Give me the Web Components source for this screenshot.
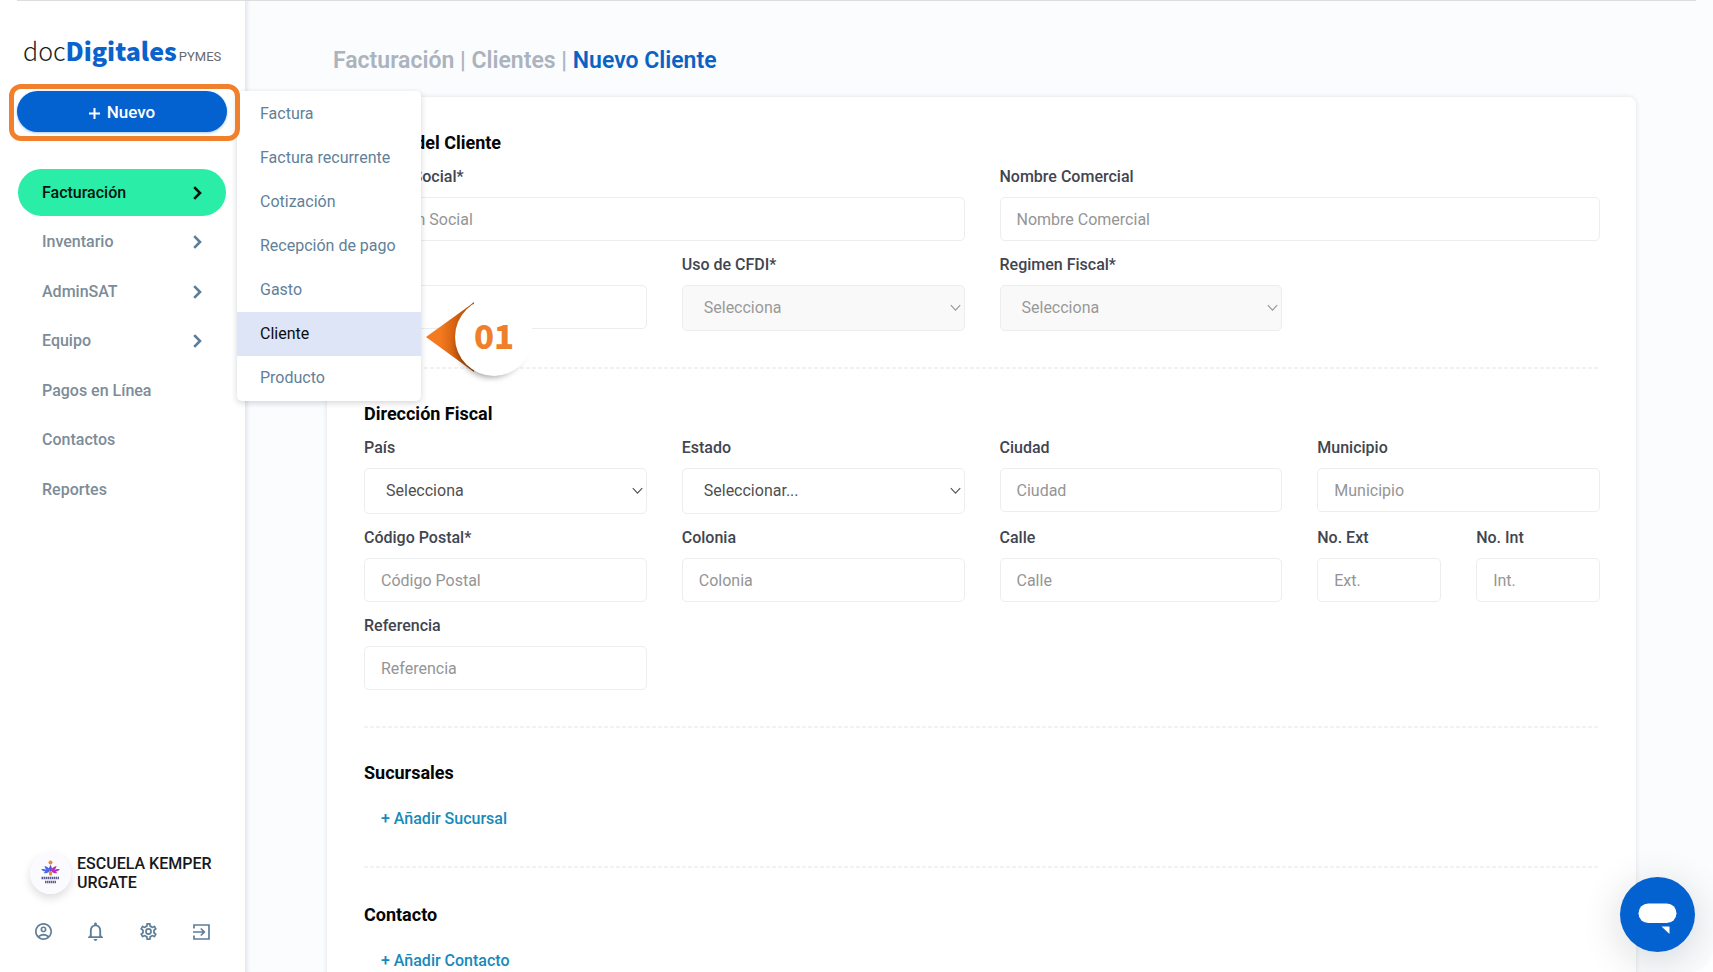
<!DOCTYPE html>
<html lang="es">
<head>
<meta charset="utf-8">
<meta name="viewport" content="width=device-width, initial-scale=1">
<title>docDigitales PYMES | Nuevo Cliente</title>
<style>
  html, body { margin: 0; height: 100%; }
  body { font-family: Roboto, "Liberation Sans", sans-serif; font-size: 16px; line-height: 20px; color: #3f444e; background: #fff; }
</style>
</head>
<body>
<dd-app>
  <dd-sidebar slot="sidebar">
    <dd-nav-item active arrow>Facturación</dd-nav-item>
    <dd-nav-item arrow>Inventario</dd-nav-item>
    <dd-nav-item arrow>AdminSAT</dd-nav-item>
    <dd-nav-item arrow>Equipo</dd-nav-item>
    <dd-nav-item>Pagos en Línea</dd-nav-item>
    <dd-nav-item>Contactos</dd-nav-item>
    <dd-nav-item>Reportes</dd-nav-item>
  </dd-sidebar>

  <dd-breadcrumb>
    <a slot="trail" href="#facturacion">Facturación</a>
    <a slot="parent" href="#clientes">Clientes</a>
    <span slot="current">Nuevo Cliente</span>
  </dd-breadcrumb>

  <dd-card>
    <dd-section heading="Datos del Cliente">
      <dd-field wide label="Razón Social*" placeholder="Razón Social"></dd-field>
      <dd-field wide label="Nombre Comercial" placeholder="Nombre Comercial"></dd-field>
      <dd-field label="RFC*" placeholder="RFC"></dd-field>
      <dd-select label="Uso de CFDI*" value="Selecciona" disabled></dd-select>
      <dd-select label="Regimen Fiscal*" value="Selecciona" disabled></dd-select>
    </dd-section>
    <dd-section heading="Dirección Fiscal">
      <dd-select label="País" value="Selecciona"></dd-select>
      <dd-select label="Estado" value="Seleccionar..."></dd-select>
      <dd-field label="Ciudad" placeholder="Ciudad"></dd-field>
      <dd-field label="Municipio" placeholder="Municipio"></dd-field>
      <dd-field label="Código Postal*" placeholder="Código Postal"></dd-field>
      <dd-field label="Colonia" placeholder="Colonia"></dd-field>
      <dd-field label="Calle" placeholder="Calle"></dd-field>
      <dd-pair>
        <dd-field label="No. Ext" placeholder="Ext."></dd-field>
        <dd-field label="No. Int" placeholder="Int."></dd-field>
      </dd-pair>
      <dd-field label="Referencia" placeholder="Referencia"></dd-field>
    </dd-section>
    <dd-section heading="Sucursales" compact>
      <dd-add-button>+ Añadir Sucursal</dd-add-button>
    </dd-section>
    <dd-section heading="Contacto" compact>
      <dd-add-button>+ Añadir Contacto</dd-add-button>
    </dd-section>
  </dd-card>

  <dd-menu slot="overlay">
    <a href="#factura">Factura</a>
    <a href="#recurrente">Factura recurrente</a>
    <a href="#cotizacion">Cotización</a>
    <a href="#recepcion">Recepción de pago</a>
    <a href="#gasto">Gasto</a>
    <a href="#cliente" aria-current="true">Cliente</a>
    <a href="#producto">Producto</a>
  </dd-menu>
  <dd-callout slot="overlay">01</dd-callout>
  <dd-chat slot="overlay"></dd-chat>
</dd-app>

<script>
  const define = (name, markup, setup) => {
    const template = document.createElement('template');
    template.innerHTML = '<style>*{box-sizing:border-box}</style>' + markup;
    customElements.define(name, class extends HTMLElement {
      constructor() {
        super();
        this.attachShadow({ mode: 'open' }).append(template.content.cloneNode(true));
      }
      connectedCallback() {
        if (setup) setup(this, this.shadowRoot);
      }
    });
  };

  define('dd-app', `
    <style>
      :host { display: grid; grid-template-columns: 245px minmax(0, 1fr); height: 100vh; position: relative; overflow: hidden; background: #fff; }
      main { min-width: 0; overflow-y: auto; scrollbar-width: none; padding: 46px 77px 0 82px; background: #fafcfe; border-bottom-right-radius: 24px; box-shadow: inset 5px 0 4px -3px rgba(30, 50, 70, .12); }
      .edge { position: absolute; top: 0; left: 17px; right: 17px; height: 1px; background: #dcdddf; z-index: 5; }
    </style>
    <div class="edge"></div>
    <slot name="sidebar"></slot>
    <main><slot></slot></main>
    <slot name="overlay"></slot>`);

  define('dd-sidebar', `
    <style>
      :host { display: flex; flex-direction: column; background: #fff; }
      .logo { display: flex; align-items: baseline; height: 36px; margin: 32px 0 16px 23px; font: 300 25px/36px "Noto Sans CJK JP", "Open Sans", sans-serif; color: #1c1e22; text-decoration: none; }
      .logo b { font-weight: 900; color: #0a62cc; }
      .logo small { margin-left: 2px; font: 400 13px/20px Roboto, sans-serif; color: #66696e; }
      .focus { position: relative; z-index: 4; margin: 0 5px 0 9px; border: 5px solid #f0802c; border-radius: 12px; padding: 2px 8px 4px 3px; }
      .new { display: block; width: 100%; height: 41px; border: 0; border-radius: 21px; background: #0362d0; color: #fff; font: 500 17px/20px Roboto, sans-serif; box-shadow: 0 1px 3px rgba(3, 98, 208, .35); }
      .new svg { margin-right: 7px; vertical-align: -1px; }
      nav { display: flex; flex-direction: column; justify-content: space-between; min-height: 344px; margin: 28px 19px 0 18px; }
      footer { margin-top: auto; padding-bottom: 31px; }
      .who { display: flex; gap: 6px; margin: 0 10px 0 30px; color: #17191d; font: 500 16px/19px Roboto, sans-serif; }
      .who svg { flex: none; border-radius: 50%; box-shadow: 0 4px 10px rgba(0, 0, 0, .14); }
      .who span { padding-top: 1px; }
      .tools { display: flex; justify-content: space-between; align-items: center; margin: 28px 35px 0 35px; }
      .tools button { display: block; border: 0; padding: 0; background: none; color: #5f7f99; line-height: 0; }
    </style>
    <a class="logo" href="#inicio">doc<b>Digitales</b><small>PYMES</small></a>
    <div class="focus"><button class="new"><svg width="11" height="11" viewBox="0 0 11 11" stroke="#fff" stroke-width="2" aria-hidden="true"><path d="M5.500 0v11M0 5.500h11"/></svg>Nuevo</button></div>
    <nav><slot></slot></nav>
    <footer>
      <div class="who">
        <svg width="41" height="41" viewBox="0 0 41 41" role="img" aria-label="Escuela Kemper">
          <circle cx="20.500" cy="20.500" r="20.500" fill="#fbfbff"/>
          <circle cx="20.500" cy="9.500" r="2" fill="#e58a3c"/>
          <path d="M20 17.500c-1-3-3.500-4-5.500-4.500.3 2 1 3 2 3.700-1.800-.6-3.600-.9-5.300-.4 1.200 1.700 2.600 2.200 4.200 2.200l-1.800 1.400c2.700.8 5.200.2 6.400-2.400z" fill="#4a68e6"/>
          <path d="M21 17.500c1-3 3.500-4 5.500-4.500-.3 2-1 3-2 3.700 1.800-.6 3.600-.9 5.300-.4-1.200 1.700-2.600 2.200-4.200 2.200l1.800 1.400c-2.700.8-5.200.2-6.400-2.400z" fill="#b432b4"/>
          <path d="M20.500 11.500l1.600 4-1.600 4-1.600-4z" fill="#6a4ad0"/>
          <rect x="19" y="18.500" width="3" height="4" rx="1" fill="#e58a3c"/>
          <path d="M11.500 25h18" stroke="#5b5c90" stroke-width="2.500" stroke-dasharray="1.500 .5"/>
          <path d="M15 29h11" stroke="#5b5c90" stroke-width="2.500" stroke-dasharray="1.500 .5"/>
        </svg>
        <span>ESCUELA KEMPER URGATE</span>
      </div>
      <div class="tools">
        <button aria-label="Cuenta"><svg width="17" height="17" viewBox="2 2 20 20" fill="currentColor"><path d="M12 2C6.480 2 2 6.480 2 12s4.480 10 10 10 10-4.480 10-10S17.520 2 12 2zM7.350 18.500C8.660 17.560 10.260 17 12 17s3.340.56 4.650 1.500C15.340 19.440 13.740 20 12 20s-3.340-.56-4.650-1.500zm10.790-1.380a9.950 9.950 0 0 0-12.280 0A7.960 7.960 0 0 1 4 12c0-4.420 3.580-8 8-8s8 3.580 8 8c0 1.950-.7 3.730-1.860 5.120zM12 6c-1.930 0-3.500 1.570-3.500 3.500S10.070 13 12 13s3.500-1.570 3.500-3.500S13.930 6 12 6zm0 5c-.83 0-1.500-.67-1.500-1.500S11.170 8 12 8s1.500.67 1.500 1.500S12.830 11 12 11z"/></svg></button>
        <button aria-label="Notificaciones"><svg width="15" height="19" viewBox="4 2 16 20" fill="currentColor"><path d="M12 22c1.100 0 2-.9 2-2h-4c0 1.100.9 2 2 2zm6-6v-5c0-3.070-1.630-5.640-4.500-6.320V4c0-.83-.67-1.500-1.500-1.500s-1.500.67-1.500 1.500v.68C7.640 5.360 6 7.920 6 11v5l-2 2v1h16v-1l-2-2zm-2 1H8v-6c0-2.480 1.510-4.500 4-4.500s4 2.020 4 4.500v6z"/></svg></button>
        <button aria-label="Configuración"><svg width="17" height="17" viewBox="2 2 20 20" fill="currentColor"><path d="M19.430 12.980c.04-.32.07-.64.07-.98s-.03-.66-.07-.98l2.110-1.650c.19-.15.24-.42.12-.64l-2-3.460a.5.5 0 0 0-.61-.22l-2.490 1c-.52-.4-1.080-.73-1.690-.98l-.38-2.650A.49.490 0 0 0 14 2h-4a.49.490 0 0 0-.49.420l-.38 2.650c-.61.25-1.170.59-1.690.98l-2.490-1a.5.5 0 0 0-.61.220l-2 3.460c-.13.220-.07.490.12.640l2.110 1.650c-.04.320-.07.650-.07.980s.03.660.07.980l-2.110 1.650c-.19.150-.24.420-.12.640l2 3.460c.12.220.39.300.61.220l2.490-1c.52.400 1.080.730 1.690.980l.38 2.650c.03.240.24.420.49.420h4c.25 0 .46-.18.49-.42l.38-2.650c.61-.25 1.170-.59 1.690-.98l2.490 1c.23.090.49 0 .61-.22l2-3.460a.5.5 0 0 0-.12-.64zM17.450 11.270c.04.310.05.520.05.730s-.02.430-.05.730l-.14 1.130.89.700 1.080.84-.7 1.210-1.270-.51-1.040-.42-.9.680c-.43.320-.84.560-1.250.730l-1.060.43-.16 1.130-.2 1.350h-1.400l-.35-2.480-1.060-.43c-.43-.18-.83-.41-1.230-.71l-.91-.7-1.060.43-1.270.51-.7-1.210 1.970-1.540-.14-1.130a8 8 0 0 1 0-1.480l.14-1.130-1.970-1.540.7-1.210 1.270.51 1.040.42.9-.68c.43-.32.84-.56 1.250-.73l1.060-.43.360-2.480h1.390l.35 2.480 1.060.43c.43.180.83.410 1.230.710l.91.700 1.060-.43 1.270-.51.7 1.210-1.960 1.550zM12 8a4 4 0 1 0 0 8 4 4 0 0 0 0-8zm0 6a2 2 0 1 1 0-4 2 2 0 0 1 0 4z"/></svg></button>
        <button aria-label="Salir"><svg width="17" height="18" viewBox="0 0 17 18" fill="none" stroke="currentColor" stroke-width="1.700"><path d="M1 5.500V2h15v14H1v-3.500M0 9h11M7.800 5.500L11.300 9l-3.500 3.500"/></svg></button>
      </div>
    </footer>`);

  define('dd-nav-item', `
    <style>
      :host { display: block; }
      a { display: flex; align-items: center; justify-content: space-between; height: 47px; padding: 0 24px; border-radius: 24px; color: #7d8c99; font-weight: 500; text-decoration: none; }
      svg { display: none; color: #5a7d9a; }
      :host([arrow]) svg { display: block; }
      :host([active]) a { background: #2aeda7; color: #07130f; }
      :host([active]) svg { color: #07130f; }
    </style>
    <a href="#"><slot></slot><svg width="9" height="14" viewBox="0 0 9 14" fill="none" stroke="currentColor" stroke-width="2.600"><path d="M1.200 1.200L7 7l-5.800 5.800"/></svg></a>`);

  define('dd-breadcrumb', `
    <style>
      :host { display: block; margin: 0 0 21px 6px; font-size: 23px; line-height: 30px; font-weight: 600; color: #abb3bd; }
      ::slotted(a) { color: inherit; text-decoration: none; }
      ::slotted(span) { color: #0a62c4; }
    </style>
    <slot name="trail"></slot> | <slot name="parent"></slot> | <slot name="current"></slot>`);

  define('dd-card', `
    <style>
      :host { display: block; padding: 34px 36px 36px 37px; min-height: calc(100vh - 97px); box-sizing: border-box; background: #fff; border-radius: 8px; box-shadow: 0 0 5px rgba(30, 50, 70, .12); }
    </style>
    <slot></slot>`);

  define('dd-section', `
    <style>
      :host { display: block; margin-bottom: 33px; padding-bottom: 38px; background: repeating-linear-gradient(90deg, #f1f2f2 0 4px, transparent 4px 6px) left bottom / 100% 2px no-repeat; }
      h2 { margin: 0 0 11px; font-size: 18px; line-height: 24px; font-weight: 700; color: #050607; }
      .grid { display: grid; grid-template-columns: repeat(4, minmax(0, 1fr)); column-gap: 35px; row-gap: 13px; align-items: start; }
      :host([compact]) { margin-bottom: 35px; padding-bottom: 39px; }
      :host([compact]) h2 { margin-bottom: 24px; }
      :host([compact]) .grid { padding-left: 17px; }
      :host(:last-child) { margin: 0; background: none; }
      ::slotted([wide]) { grid-column: span 2; }
    </style>
    <h2></h2><div class="grid"><slot></slot></div>`,
    (el, root) => { root.querySelector('h2').textContent = el.getAttribute('heading'); });

  define('dd-pair', `
    <style>:host { display: grid; grid-template-columns: repeat(2, minmax(0, 1fr)); column-gap: 35px; }</style>
    <slot></slot>`);

  define('dd-field', `
    <style>
      :host { display: block; }
      label { display: block; margin-bottom: 9px; line-height: 22px; font-weight: 500; color: #41454f; }
      input { display: block; width: 100%; height: 44px; padding: 0 16px; border: 1px solid #ecedee; border-radius: 5px; background: #fff; font: inherit; color: #444; outline: 0; }
      input::placeholder { color: #959595; opacity: 1; }
    </style>
    <label for="box"></label><input id="box" type="text">`,
    (el, root) => {
      root.querySelector('label').textContent = el.getAttribute('label');
      root.querySelector('input').placeholder = el.getAttribute('placeholder');
    });

  define('dd-select', `
    <style>
      :host { display: block; }
      label { display: block; margin-bottom: 9px; line-height: 22px; font-weight: 500; color: #41454f; }
      .box { display: grid; align-items: center; }
      select, svg { grid-area: 1 / 1; }
      select { appearance: none; width: 100%; height: 46px; padding: 0 21px; border: 1px solid #ecedee; border-radius: 5px; background: #fff; font: inherit; color: #4f4f4f; opacity: 1; }
      svg { justify-self: end; margin-right: 4px; color: #555; pointer-events: none; }
      :host([disabled]) select { background: #f9f9f9; color: #999; }
      :host([disabled]) svg { color: #999; }
    </style>
    <label for="box"></label>
    <div class="box"><select id="box"><option></option></select><svg width="11" height="8" viewBox="0 0 11 8" fill="none" stroke="currentColor" stroke-width="1.200"><path d="M.8 1.200l4.700 5 4.700-5"/></svg></div>`,
    (el, root) => {
      root.querySelector('label').textContent = el.getAttribute('label');
      root.querySelector('option').textContent = el.getAttribute('value');
      root.querySelector('select').disabled = el.hasAttribute('disabled');
    });

  define('dd-add-button', `
    <style>
      :host { display: block; }
      button { display: block; border: 0; padding: 0; background: none; font: 500 16px/20px Roboto, sans-serif; color: #168abb; white-space: nowrap; }
    </style>
    <button type="button"><slot></slot></button>`);

  define('dd-menu', `
    <style>
      :host { position: absolute; left: 237px; top: 91px; z-index: 3; display: block; width: 184px; padding: 1px 0; box-sizing: border-box; background: #fff; border-radius: 5px; box-shadow: 0 2px 6px rgba(20, 30, 50, .18); }
      ::slotted(a) { display: block; padding: 0 23px; line-height: 44px; color: #627f99; text-decoration: none; white-space: nowrap; }
      ::slotted(a[aria-current]) { background: #dde5f6; color: #0b0d10; }
    </style>
    <slot></slot>`);

  define('dd-callout', `
    <style>
      :host { position: absolute; left: 426px; top: 298px; z-index: 4; display: grid; justify-items: end; width: 107px; height: 78px; }
      svg, div { grid-area: 1 / 1; }
      svg { justify-self: start; }
      div { width: 78px; height: 78px; border-radius: 50%; background: #fff; box-shadow: -3px 6px 6px -5px rgba(0, 0, 0, .4); color: #f07f2b; font: 900 33px/74px "Noto Sans CJK JP", "DejaVu Sans", sans-serif; text-align: center; }
    </style>
    <svg width="52" height="78" viewBox="0 0 52 78" aria-hidden="true">
      <defs><linearGradient id="g" x1="0" y1="0" x2="1" y2="0"><stop offset="0.300" stop-color="#f47a20"/><stop offset="0.700" stop-color="#c95a0c"/><stop offset="1" stop-color="#a84804"/></linearGradient></defs>
      <path d="M0 39L43 8l5-4v70z" fill="url(#g)"/>
    </svg>
    <div><slot></slot></div>`);

  define('dd-chat', `
    <style>
      :host { position: absolute; right: 18px; bottom: 20px; z-index: 4; display: block; }
      button { display: block; width: 75px; height: 75px; padding: 0; border: 0; border-radius: 50%; background: #0362d0; box-shadow: 0 8px 40px rgba(0, 20, 20, .16); line-height: 0; }
    </style>
    <button type="button" aria-label="Abrir chat"><svg width="75" height="75" viewBox="0 0 75 75" fill="#fff"><rect x="18.500" y="26.500" width="38" height="19.500" rx="9.700"/><path d="M41.500 49.500h8V57z"/></svg></button>`);
</script>
</body>
</html>
